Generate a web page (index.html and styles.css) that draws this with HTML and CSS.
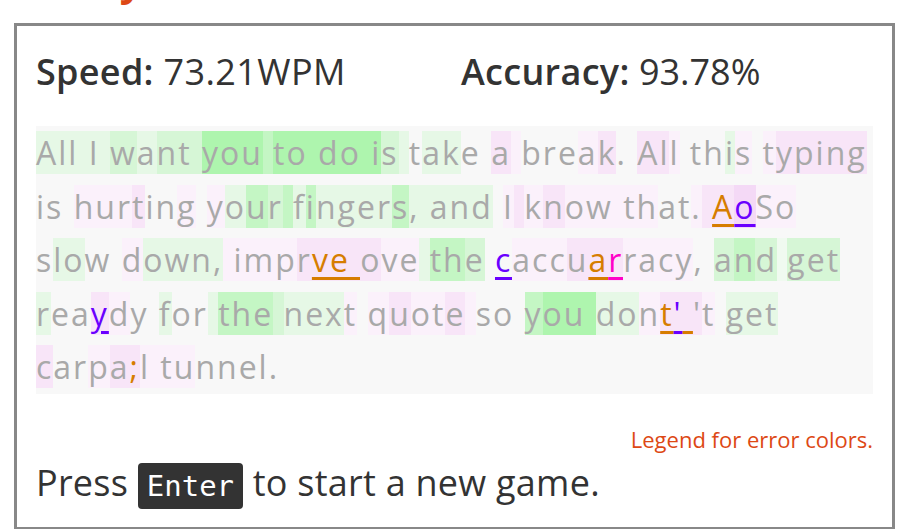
FILE: index.html
```html
<!DOCTYPE html>
<html lang="en">
<head>
<meta charset="utf-8">
<title>Results</title>
<link rel="stylesheet" href="styles.css">
</head>
<body>
<div class="page">
  <h1 class="title">Tally</h1>
  <section class="panel">
    <div class="stats">
      <div class="stat"><b>Speed:</b> 73.21WPM</div>
      <div class="stat"><b>Accuracy:</b> 93.78%</div>
    </div>
    <div class="quote">
      <div class="line"><span class="g1">All I </span><span class="g2">w</span><span class="g1">a</span><span class="g2">nt </span><span class="g4">you</span><span class="g3"> </span><span class="g4">to do i</span><span class="g2">s</span><span class="g1"> </span><span>t</span><span class="g1">ak</span><span>e </span><span class="p2">a</span><span class="p1"> </span><span>bre</span><span class="p1">a</span><span class="p2">k</span><span>. </span><span class="p2">Al</span><span class="p1">l</span><span> th</span><span class="g1">i</span><span class="p1">s</span><span> </span><span class="p1">t</span><span class="p2">yping</span></div>
      <div class="line"><span>is </span><span class="p1">hur</span><span class="p2">t</span><span>in</span><span class="p1">g</span><span> </span><span class="p1">y</span><span class="g1">o</span><span class="g3">u</span><span class="g2">r</span><span class="g3"> </span><span class="g1">f</span><span class="g3">i</span><span class="g1">nger</span><span class="g3">s</span><span class="g1">, and</span><span> </span><span class="p1">I</span><span class="p2"> </span><span class="p1">k</span><span class="p2">n</span><span class="p1">ow th</span><span>at</span><span class="p1">.</span><span class="p2"> </span><span class="p2 eo">A</span><span class="p3 ep">o</span><span class="p1">So</span></div>
      <div class="line"><span>s</span><span class="g1">lo</span><span>w </span><span class="p1">d</span><span class="g1">own,</span><span class="p1"> imp</span><span class="p2">r</span><span class="p2 eo">ve </span><span class="p2">o</span><span class="p1">ve</span><span class="g1"> </span><span class="g3">th</span><span class="g2">e</span><span> </span><span class="ep">c</span><span class="p1">acc</span><span class="p2">u</span><span class="p2 eo">a</span><span class="p2 em">r</span><span class="p1">racy</span><span>, </span><span class="g2">a</span><span class="g3">n</span><span class="g2">d</span><span class="g0"> </span><span class="g2">get</span></div>
      <div class="line"><span class="g1">r</span><span>ea</span><span class="p2 ep">y</span><span class="p1">d</span><span>y </span><span class="g1">f</span><span>or</span><span class="g1"> </span><span class="g3">the</span><span class="g2"> </span><span class="g1">nex</span><span class="p1">t</span><span> </span><span class="p1">q</span><span class="p2">u</span><span class="p1">ot</span><span class="p2">e</span><span class="p1"> </span><span>so </span><span class="g3">y</span><span class="g4">ou </span><span class="g1">do</span><span class="p1">n</span><span class="p2 eo">t</span><span class="p2 ep">'</span><span class="p2 eo"> </span><span class="p2">'</span><span class="p1">t</span><span> </span><span class="g1">get</span></div>
      <div class="line"><span class="p2">c</span><span>ar</span><span class="p1">p</span><span class="p2">a</span><span class="p2 eo nu">;</span><span class="p1">l tu</span><span>nnel.</span></div>
    </div>
    <p class="legend">Legend for error colors.</p>
    <p class="prompt">Press <kbd class="key">Enter</kbd> to start a new game.</p>
  </section>
</div>
</body>
</html>
```
FILE: styles.css
```css
html, body {
  margin: 0;
  padding: 0;
  background: #ffffff;
}

body {
  font-family: "Open Sans", "Noto Sans", sans-serif;
  color: #333333;
}

.page {
  display: flow-root;
  margin: 0 7px 0 14px;
}

.title {
  margin: -39px 0 22px 0;
  padding-left: 34px;
  font-size: 40px;
  line-height: 40px;
  font-weight: 700;
  color: #dd4814;
}

.panel {
  border: 3px solid #888888;
  padding: 0 19px 18px 19px;
}

.stats {
  display: grid;
  grid-template-columns: 425px auto;
  padding-top: 24px;
  margin-bottom: 33px;
  font-size: 36px;
  line-height: 43px;
  color: #333333;
}

.stat:first-child {
  letter-spacing: 0.4px;
}

.stat b {
  font-weight: 600;
  letter-spacing: 0.3px;
}

.quote {
  background: #f8f8f8;
  color: #a9a9a9;
  font-size: 32px;
  line-height: 53.5px;
  letter-spacing: 2px;
}

.line {
  white-space: pre;
}

.g0 { background: #f0faf0; }
.g1 { background: #e6f8e6; }
.g2 { background: #d6f6d6; }
.g3 { background: #c4f6c4; }
.g4 { background: #aef5ae; }
.p1 { background: #fbf1fb; }
.p2 { background: #f8e5f8; }
.p3 { background: #f4d9f6; }

.eo, .ep, .em {
  text-decoration-line: underline;
  text-decoration-thickness: 3px;
  text-underline-offset: 5px;
}

.eo { color: #d67d00; }
.ep { color: #6a00ff; }
.em { color: #ff00c8; }
.nu { text-decoration-line: none; }

.legend {
  margin: 33px 0 0 0;
  text-align: right;
  font-size: 22px;
  line-height: 25px;
  color: #dd4814;
}

.prompt {
  margin: 9px 0 0 0;
  font-size: 36px;
  line-height: 43px;
  letter-spacing: 0.25px;
  color: #333333;
}

.key {
  display: inline-block;
  padding: 0 9px;
  background: #333333;
  color: #ffffff;
  border-radius: 4px;
  font-family: "DejaVu Sans Mono", monospace;
  font-size: 29px;
  line-height: 46px;
  letter-spacing: 0;
}
```
